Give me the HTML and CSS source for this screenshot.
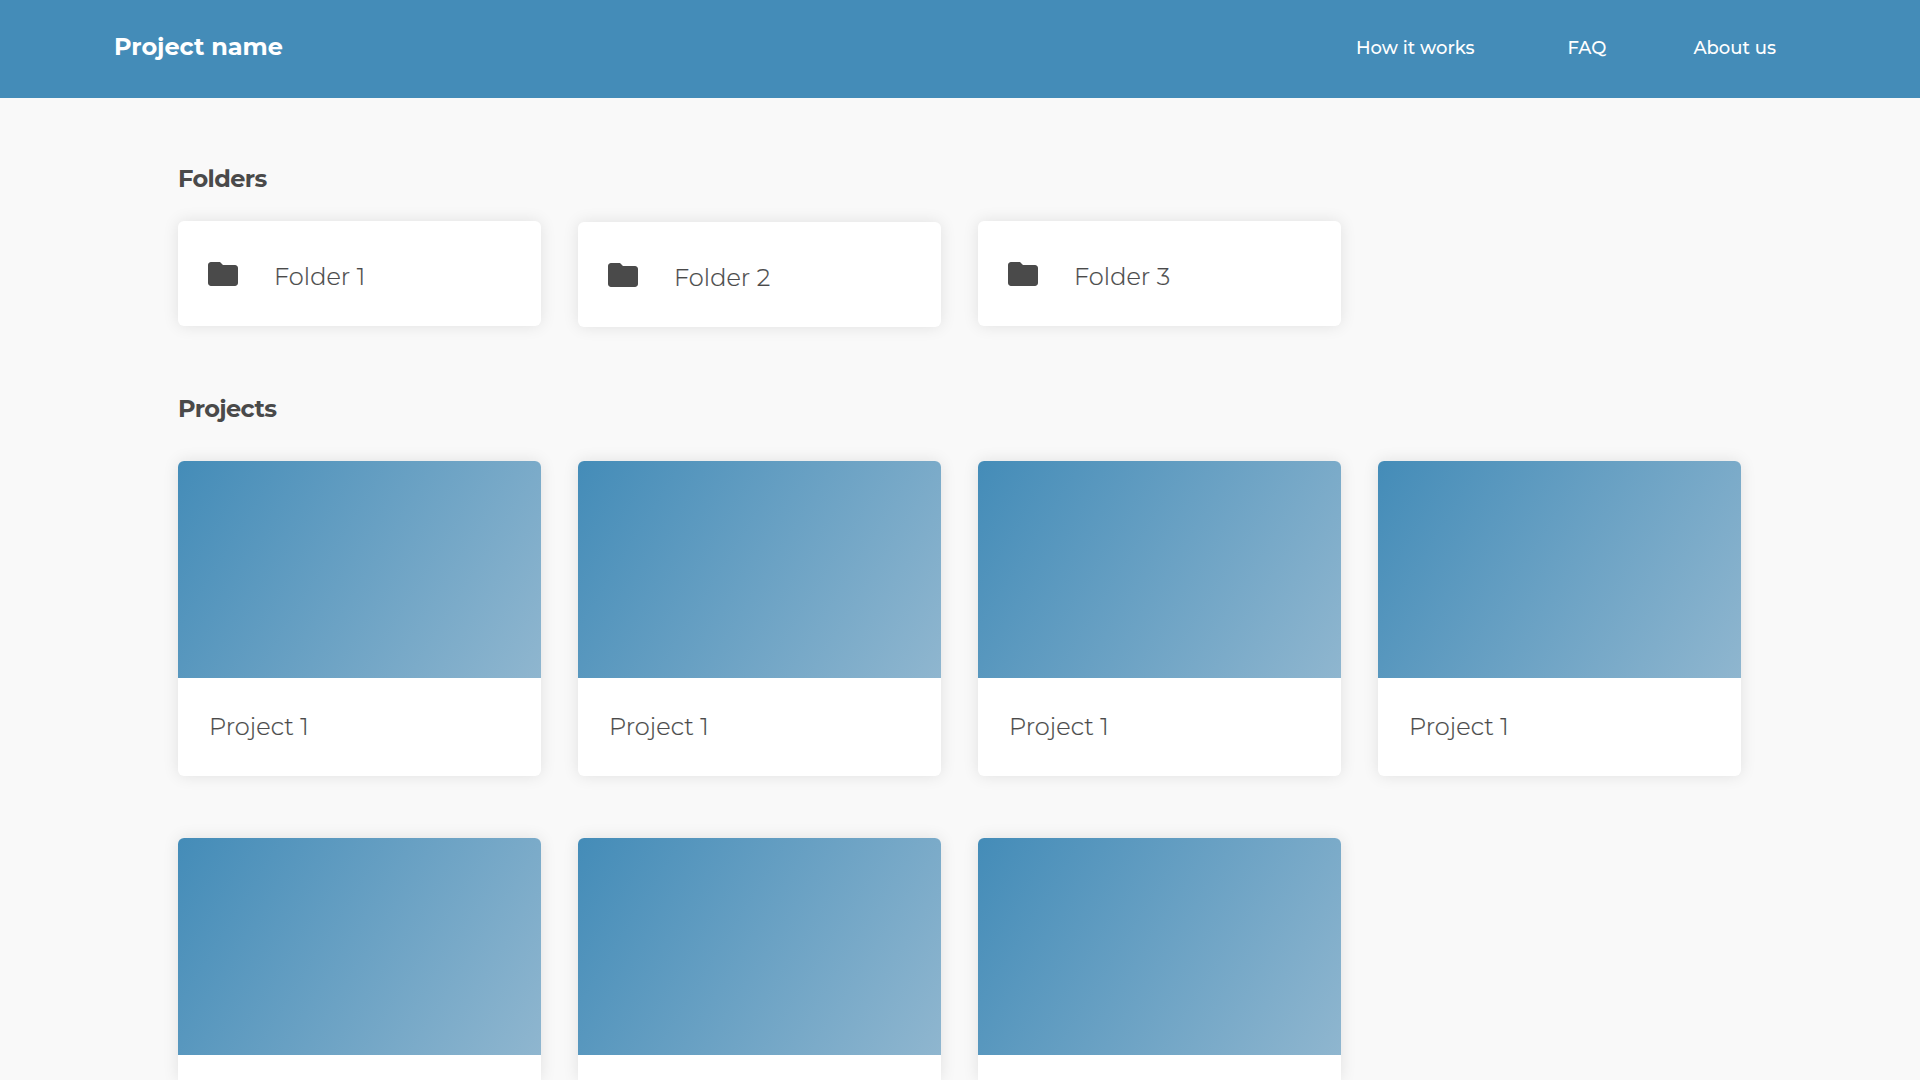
FILE: index.html
```
<!DOCTYPE html>
<html lang="en">
<head>
<meta charset="utf-8">
<title>Project name</title>
<link rel="stylesheet" href="styles.css">
</head>
<body>
<header class="topbar">
  <div class="brand">Project name</div>
  <nav class="nav">
    <a class="nav-link">How it works</a>
    <a class="nav-link nav-faq">FAQ</a>
    <a class="nav-link nav-about">About us</a>
  </nav>
</header>
<main class="content">
  <h2 class="heading">Folders</h2>
  <section class="grid folders">
    <article class="card folder"><svg class="icon" viewBox="0 0 24 24"><path d="M10 4H4c-1.1 0-2 .9-2 2v12c0 1.1.9 2 2 2h16c1.1 0 2-.9 2-2V8c0-1.1-.9-2-2-2h-8z"/></svg><span class="folder-name">Folder 1</span></article>
    <article class="card folder folder-lowered"><svg class="icon" viewBox="0 0 24 24"><path d="M10 4H4c-1.1 0-2 .9-2 2v12c0 1.1.9 2 2 2h16c1.1 0 2-.9 2-2V8c0-1.1-.9-2-2-2h-8z"/></svg><span class="folder-name">Folder 2</span></article>
    <article class="card folder"><svg class="icon" viewBox="0 0 24 24"><path d="M10 4H4c-1.1 0-2 .9-2 2v12c0 1.1.9 2 2 2h16c1.1 0 2-.9 2-2V8c0-1.1-.9-2-2-2h-8z"/></svg><span class="folder-name">Folder 3</span></article>
  </section>
  <h2 class="heading">Projects</h2>
  <section class="grid projects">
    <article class="card"><div class="cover"></div><div class="caption">Project 1</div></article>
    <article class="card"><div class="cover"></div><div class="caption">Project 1</div></article>
    <article class="card"><div class="cover"></div><div class="caption">Project 1</div></article>
    <article class="card"><div class="cover"></div><div class="caption">Project 1</div></article>
    <article class="card card-cut"><div class="cover"></div></article>
    <article class="card card-cut"><div class="cover"></div></article>
    <article class="card card-cut"><div class="cover"></div></article>
  </section>
</main>
</body>
</html>
```
FILE: styles.css
```
* { box-sizing: border-box; }
body {
  margin: 0;
  background: #f9f9f9;
  color: #4a4a4a;
  font-family: Montserrat, Inter, sans-serif;
}
.topbar {
  display: flex;
  justify-content: space-between;
  height: 98px;
  padding: 32px 144px 0 114px;
  background: #448cb8;
  color: #fff;
}
.brand { font-size: 24px; font-weight: 700; line-height: 30px; }
.nav { display: flex; padding-top: 1px; }
.nav-link { font-size: 18px; font-weight: 500; line-height: 30px; white-space: nowrap; }
.nav-faq { margin-left: 93px; }
.nav-about { margin-left: 87px; }
.content {
  height: 982px;
  padding: 66px 178px 0;
  overflow: hidden;
}
.heading {
  margin: 0;
  font-size: 24px;
  font-weight: 700;
  line-height: 30px;
  letter-spacing: -0.58px;
}
.grid {
  display: grid;
  grid-template-columns: repeat(4, 363px);
  column-gap: 37px;
}
.folders { margin: 27px 0 68px; }
.projects { margin-top: 37px; row-gap: 62px; }
.card {
  border-radius: 6px;
  background: #fff;
  box-shadow: 0 0 16px rgba(0, 0, 0, 0.1);
}
.card-cut {
  height: 242px;
  border-radius: 6px 6px 0 0;
}
.folder {
  display: flex;
  align-items: center;
  height: 105px;
  padding-left: 27px;
}
.folder-lowered { transform: translateY(1px); }
.icon { width: 36px; height: 36px; fill: #4a4a4a; }
.folder-name {
  margin-left: 33px;
  padding-top: 6px;
  font-size: 24px;
  font-weight: 350;
  line-height: 30px;
  letter-spacing: 0.1px;
  -webkit-text-stroke: 0.2px #4a4a4a;
}
.cover {
  height: 217px;
  border-radius: 6px 6px 0 0;
  background: linear-gradient(122deg, #448cb8, #8fb6cf);
}
.caption {
  height: 98px;
  padding: 34px 0 0 31px;
  font-size: 24px;
  font-weight: 350;
  line-height: 30px;
  letter-spacing: 0.1px;
  -webkit-text-stroke: 0.2px #4a4a4a;
}
```
